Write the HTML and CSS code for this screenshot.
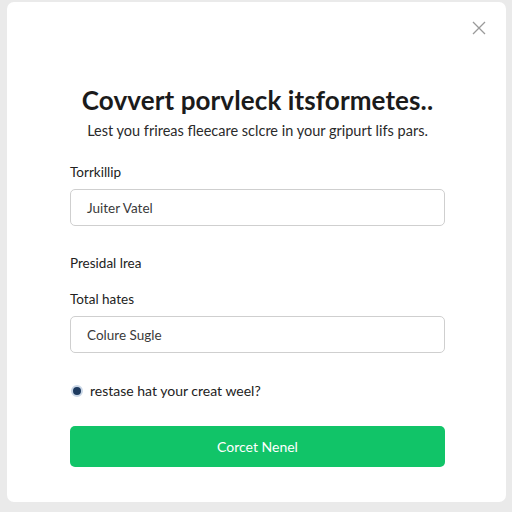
FILE: index.html
```html
<!DOCTYPE html>
<html>
<head>
<meta charset="utf-8">
<link rel="stylesheet" href="styles.css">
</head>
<body>
<div class="card">
  <button class="close" aria-label="Close">
    <svg width="14" height="14" viewBox="0 0 14 14"><path d="M1 1L13 13M13 1L1 13" stroke="#9a9a9a" stroke-width="1.3" fill="none"/></svg>
  </button>
  <h1 class="title">Covvert porvleck itsformetes..</h1>
  <p class="subtitle">Lest you frireas fleecare sclcre in your gripurt lifs pars.</p>
  <label class="label first">Torrkillip</label>
  <div class="input">Juiter Vatel</div>
  <div class="label section">Presidal lrea</div>
  <label class="label sub">Total hates</label>
  <div class="input">Colure Sugle</div>
  <div class="check">
    <span class="radio"></span>
    <span>restase hat your creat weel?</span>
  </div>
  <button class="primary">Corcet Nenel</button>
</div>
</body>
</html>
```
FILE: styles.css
```css
* { box-sizing: border-box; }
html, body { margin: 0; }
body {
  background: #eaeaea;
  padding: 2px 6px 10px 7px;
  font-family: "Lato", "Liberation Sans", sans-serif;
  color: #222;
}
.card {
  position: relative;
  background: #fff;
  border-radius: 7px;
  height: 500px;
  padding: 83px 61px 0 63px;
  display: flex;
  flex-direction: column;
}
.close {
  position: absolute;
  top: 19px;
  right: 20px;
  border: none;
  background: none;
  padding: 0;
  width: 14px;
  height: 14px;
}
.close svg { display: block; }
.title {
  margin: 0;
  text-align: center;
  font-size: 26px;
  line-height: 30px;
  font-weight: 700;
  color: #1b1b1b;
  letter-spacing: 0.1px;
}
.subtitle {
  margin: 6px 0 0;
  text-align: center;
  font-size: 14.5px;
  line-height: 20px;
  color: #2a2a2a;
}
.label {
  font-size: 13.5px;
  line-height: 18px;
  color: #222;
}
.label.first { margin-top: 22px; }
.label.section { margin-top: 28px; }
.label.sub { margin-top: 18px; }
.input {
  margin-top: 8px;
  height: 37px;
  border: 1px solid #cfcfcf;
  border-radius: 5px;
  padding: 0 16px;
  display: flex;
  align-items: center;
  font-size: 13.5px;
  color: #3a3a3a;
}
.check {
  margin-top: 29px;
  display: flex;
  align-items: center;
  gap: 7px;
  font-size: 14px;
  line-height: 18px;
  color: #222;
}
.radio {
  width: 12px;
  height: 12px;
  border-radius: 50%;
  background: #1d3a5f;
  border: 2px solid #c9d6e6;
  margin-left: 1px;
}
.primary {
  margin-top: 26px;
  height: 41px;
  border: none;
  border-radius: 5px;
  background: #11c468;
  color: #fff;
  font-family: inherit;
  font-size: 14px;
  font-weight: 400;
}
```
